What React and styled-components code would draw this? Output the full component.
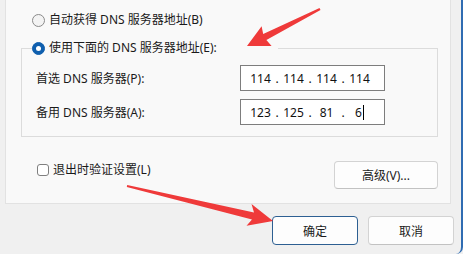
import React from "react";
import styled, { createGlobalStyle } from "styled-components";

const GlobalStyle = createGlobalStyle`
  body {
    margin: 0;
    background: #f0f0f0;
    font-family: "Noto Sans", "Noto Sans CJK SC", sans-serif;
    font-size: 12px;
    color: #1a1a1a;
  }
`;

const Window = styled.div`
  position: relative;
  width: 463px;
  height: 254px;
  box-sizing: border-box;
  background: #f0f0f0;
  border-right: 2px solid #2f6cb2;
  border-bottom-right-radius: 7px;
  overflow: hidden;
`;

const Panel = styled.div`
  margin-left: 5px;
  width: 446px;
  height: 204px;
  box-sizing: border-box;
  padding: 12px 0 0 15px;
  background: #f9f9f9;
  border: 1px solid #e2e2e2;
  border-top: none;
`;

const OptionRow = styled.label`
  display: flex;
  align-items: center;
  gap: 4px;
  height: 16px;
  line-height: 16px;
  margin-left: ${({ $indent }) => $indent || 0}px;
  white-space: nowrap;
`;

const Radio = styled.span`
  position: relative;
  width: 13px;
  height: 13px;
  box-sizing: border-box;
  border-radius: 50%;
  flex-shrink: 0;
  background: ${({ $checked }) => ($checked ? "#0f5fae" : "#f3f3f3")};
  border: 1px solid ${({ $checked }) => ($checked ? "#0f5fae" : "#8a8a8a")};

  &::after {
    content: "";
    display: ${({ $checked }) => ($checked ? "block" : "none")};
    position: absolute;
    left: 3px;
    top: 3px;
    width: 5px;
    height: 5px;
    border-radius: 50%;
    background: #fff;
  }
`;

const Group = styled.fieldset`
  margin: 12px 0 0 0;
  width: 417px;
  box-sizing: border-box;
  padding: 9px 0 11px 14px;
  border: 1px solid #dcdcdc;
  min-inline-size: 0;
`;

const Legend = styled.legend`
  width: 246px;
  padding: 0;
  margin-left: -4px;
`;

const Fields = styled.div`
  display: grid;
  grid-template-columns: 204px 145px;
  grid-auto-rows: 26px;
  row-gap: 8px;
  align-items: center;
`;

const IpBox = styled.div`
  display: flex;
  align-items: center;
  height: 26px;
  box-sizing: border-box;
  padding-left: 6px;
  background: #fff;
  border: 1px solid #7d7d7d;
  color: #111;
`;

const Octet = styled.span`
  width: 27px;
  text-align: center;
`;

const Dot = styled.span`
  width: 6px;
  text-align: center;
`;

const Caret = styled.span`
  display: inline-block;
  width: 1px;
  height: 15px;
  margin-left: 1px;
  vertical-align: -3px;
  background: #000;
`;

const Footer = styled.div`
  display: flex;
  justify-content: space-between;
  align-items: flex-start;
  width: 417px;
  margin-top: 24px;
`;

const Checkbox = styled.span`
  width: 12px;
  height: 12px;
  box-sizing: border-box;
  border: 1px solid #7f7f7f;
  border-radius: 3px;
  background: #fff;
  flex-shrink: 0;
`;

const CheckRow = styled(OptionRow)`
  margin-top: 1px;
  margin-left: 16px;
`;

const Button = styled.button`
  width: ${({ $w }) => $w}px;
  height: ${({ $h }) => $h}px;
  padding: 0;
  font: inherit;
  color: #1a1a1a;
  background: #fdfdfd;
  border: 1px solid ${({ $primary }) => ($primary ? "#2d5f92" : "#d3d3d3")};
  border-bottom-color: ${({ $primary }) => ($primary ? "#2d5f92" : "#c2c2c2")};
  border-radius: 4px;
`;

const ButtonBar = styled.div`
  display: flex;
  justify-content: flex-end;
  gap: 10px;
  margin-top: 12px;
  padding-right: 7px;
`;

const Annotations = styled.svg`
  position: absolute;
  left: 0;
  top: 0;
  pointer-events: none;
`;

const IpInput = ({ parts, caret }) => (
  <IpBox>
    {parts.map((p, i) => (
      <React.Fragment key={i}>
        {i > 0 && <Dot>.</Dot>}
        <Octet>
          {p}
          {caret && i === parts.length - 1 && <Caret />}
        </Octet>
      </React.Fragment>
    ))}
  </IpBox>
);

export default function App() {
  return (
    <>
      <GlobalStyle />
      <Window>
        <Panel>
          <OptionRow $indent={11}>
            <Radio />
            自动获得 DNS 服务器地址(B)
          </OptionRow>
          <Group>
            <Legend>
              <OptionRow>
                <Radio $checked />
                使用下面的 DNS 服务器地址(E):
              </OptionRow>
            </Legend>
            <Fields>
              <span>首选 DNS 服务器(P):</span>
              <IpInput parts={["114", "114", "114", "114"]} />
              <span>备用 DNS 服务器(A):</span>
              <IpInput parts={["123", "125", "81", "6"]} caret />
            </Fields>
          </Group>
          <Footer>
            <CheckRow>
              <Checkbox />
              退出时验证设置(L)
            </CheckRow>
            <Button $w={104} $h={28}>高级(V)...</Button>
          </Footer>
        </Panel>
        <ButtonBar>
          <Button $w={86} $h={29} $primary>确定</Button>
          <Button $w={86} $h={29}>取消</Button>
        </ButtonBar>
        <Annotations width="463" height="254">
          <polygon
            fill="#ef3a3a"
            points="247,46 261.6,26.3 263.2,33.9 319.5,8.1 320.5,9.9 266.4,40.1 271.6,45.9"
          />
          <polygon
            fill="#ef3a3a"
            points="273,221 251.5,204 254,212.6 127.2,185 126.8,187 252,219.4 246.5,225.7"
          />
        </Annotations>
      </Window>
    </>
  );
}
